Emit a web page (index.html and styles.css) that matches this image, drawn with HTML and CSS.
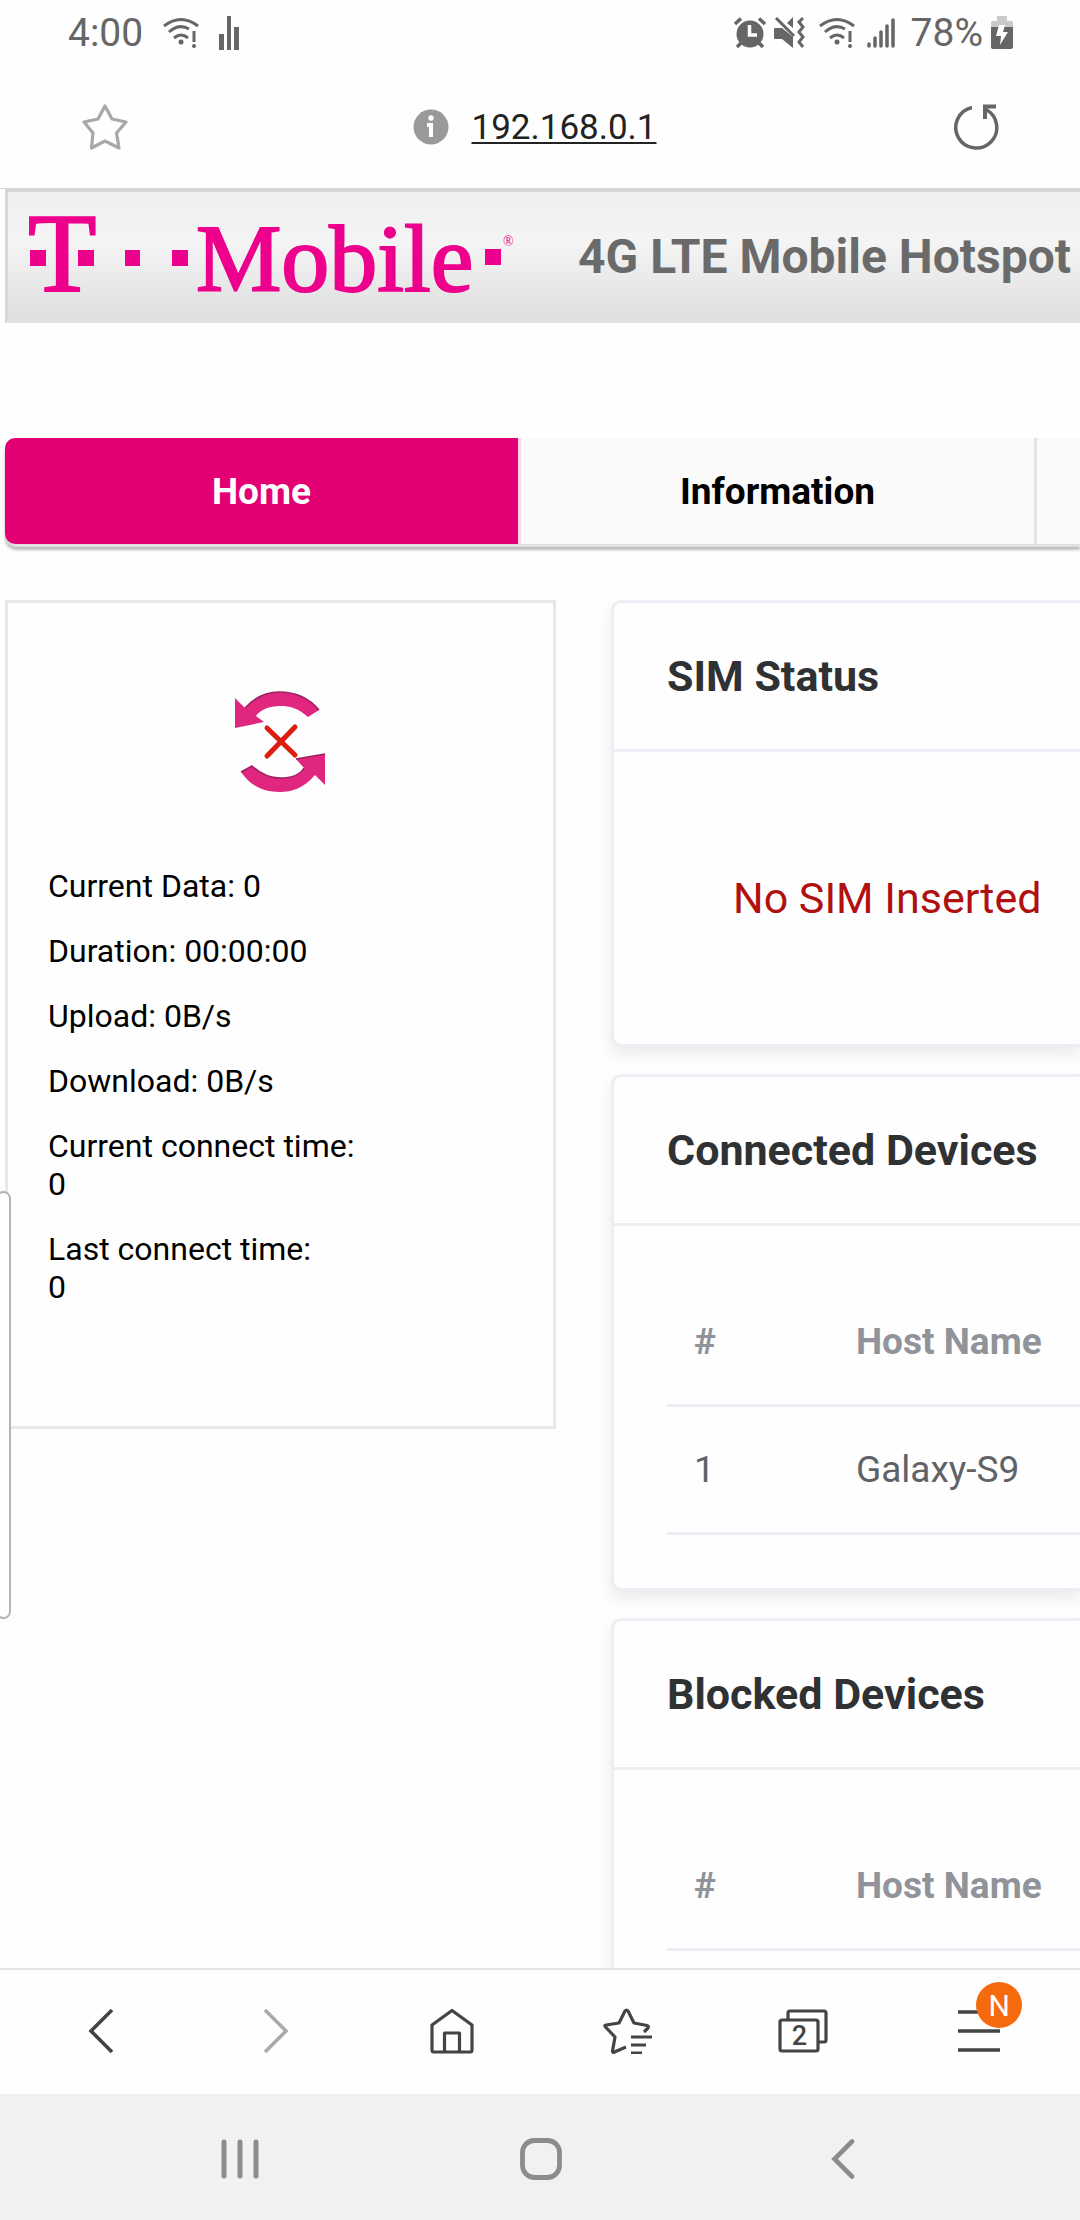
FILE: index.html
```html
<!DOCTYPE html>
<html lang="en">
<head>
	<meta charset="utf-8">
	<title>4G LTE Mobile Hotspot</title>
	<link rel="stylesheet" href="styles.css">
</head>
<body>

	<div class="status">
		<div class="status-side">
			<span class="clock">4:00</span>
			<svg class="wifi" width="36" height="32" viewBox="0 0 36 32" fill="none" stroke="#666" stroke-width="3">
				<path d="M1 9Q18 -4 35 9M6 15Q16 6 26 12M11 21Q18 15 25 21"/>
				<path d="M31 14V25"/>
				<circle cx="18" cy="25" r="2.5" fill="#666" stroke="none"/><circle cx="31" cy="29" r="2" fill="#666" stroke="none"/>
			</svg>
			<svg width="20" height="34" viewBox="0 0 20 34" fill="#666"><path d="M0 18H5V34H0ZM8 0H12V34H8ZM15 11H20V34H15Z"/></svg>
		</div>
		<div class="status-side status-right">
			<svg width="32" height="32" viewBox="0 0 32 32">
				<circle cx="16" cy="17" r="13.5" fill="#666"/>
				<path d="M1 7L7 1.500M31 7L25 1.500M3 30L8 25M29 30L24 25" stroke="#666" stroke-width="3.500"/>
				<path d="M15.500 8V18H23" fill="none" stroke="#fff" stroke-width="3.500"/>
			</svg>
			<svg width="32" height="32" viewBox="0 0 32 32">
				<path d="M0 12Q0 11 1 11H8L19 20V31L8 22H1Q0 22 0 21ZM13 6L19 0V11Z" fill="#666"/>
				<path d="M2 1L20 19" stroke="#666" stroke-width="3"/>
				<path d="M29 1L25 5L29 10L25 15L29 20L25 25L29 30" fill="none" stroke="#666" stroke-width="3"/>
			</svg>
			<svg class="wifi2" width="36" height="32" viewBox="0 0 36 32" fill="none" stroke="#666" stroke-width="3">
				<path d="M1 9Q18 -4 35 9M6 15Q16 6 26 12M11 21Q18 15 25 21"/>
				<path d="M31 14V25"/>
				<circle cx="18" cy="25" r="2.5" fill="#666" stroke="none"/><circle cx="31" cy="29" r="2" fill="#666" stroke="none"/>
			</svg>
			<svg width="28" height="30" viewBox="0 0 28 30" stroke="#666" stroke-width="3.500" stroke-linecap="round"><path d="M2 26V28M8 20V28M14 14V28M20 8V28M26 2V28"/></svg>
			<span class="battery-text">78%</span>
			<svg width="22" height="34" viewBox="0 0 22 34">
				<path d="M6 0H16V5H20Q22 5 22 7V13H0V7Q0 5 2 5H6Z" fill="#c9c9c9"/>
				<path d="M0 11H22V31Q22 33 20 33H2Q0 33 0 31Z" fill="#666"/>
				<path d="M8 9H14L12 16H17L9 29L10 20H5Z" fill="#fff"/>
			</svg>
		</div>
	</div>

	<div class="urlbar">
		<button class="icon-btn" aria-label="Add bookmark">
			<svg width="46" height="46" viewBox="0 0 46 46" fill="none" stroke="#a8a8a8" stroke-width="3.200" stroke-linejoin="round"><path d="M23 2L30 15L44 18L34.500 29L37 44L23 37L9.500 44L11 29L2 18L16 15Z"/></svg>
		</button>
		<div class="address">
			<svg width="36" height="36" viewBox="0 0 36 36"><circle cx="18" cy="18" r="17.500" fill="#999"/><circle cx="18" cy="9" r="2.700" fill="#fff"/><path d="M14 14H20V28H16V18H14Z" fill="#fff"/></svg>
			<a href="#">192.168.0.1</a>
		</div>
		<button class="icon-btn" aria-label="Reload">
			<svg width="46" height="46" viewBox="0 0 46 46" fill="none" stroke="#666"><path d="M18 3.500A20.500 20.500 0 1 0 32 5.500" stroke-width="3.500"/><path d="M42 2.500H31V15" stroke-width="4"/></svg>
		</button>
	</div>

	<div class="page">
		<div class="banner">
			<svg class="logo" width="484" height="90" viewBox="0 0 484 90" fill="#ec008c" stroke="#ec008c" role="img" aria-label="T-Mobile">
				<g stroke="none"><path d="M0 39H16V55H0ZM48 39H64V55H48ZM95 39H110V55H95ZM142 39H158V55H142ZM455 38H471V54H455Z"/></g>
				<text class="logo-t" x="-2" y="80">T</text>
				<text class="logo-name" x="166" y="80">Mobile</text>
				<text class="logo-reg" x="473" y="35">®</text>
			</svg>
			<h1>4G LTE Mobile Hotspot</h1>
		</div>

		<nav class="tabs">
			<a href="#" class="selected">Home</a>
			<a href="#">Information</a>
			<a href="#" aria-label="More"></a>
		</nav>

		<div class="columns">
			<div class="traffic">
				<svg width="94" height="104" viewBox="0 0 94 104">
					<g fill="#e0267f">
						<path d="M1 7L11 17C22 5 33 1 45 1C63 1 75 7 85 19L74 26C64 17 56 15 46 15C35 15 26 19 22 25L30 31L1 37Z"/>
						<path d="M91 94L81 84C70 97 58 101 46 101C28 101 16 94 7 81L18 75C28 84 36 87 46 87C57 87 66 84 70 77L62 68L91 63Z"/>
					</g>
					<path d="M11 17C22 5 33 1 45 1C63 1 75 7 85 19M7 81L18 75C28 84 36 87 46 87C57 87 66 84 70 77M62 68L91 63" fill="none" stroke="#9c2160" stroke-width="1.500"/>
					<path d="M33 37L61 64M61 36L33 65" stroke="#dd1d10" stroke-width="5" stroke-linecap="round"/>
				</svg>
				<p>Current Data: 0</p>
				<p>Duration: 00:00:00</p>
				<p>Upload: 0B/s</p>
				<p>Download: 0B/s</p>
				<p>Current connect time:<br>0</p>
				<p>Last connect time:<br>0</p>
			</div>

			<div class="cards">
				<section class="card">
					<h2>SIM Status</h2>
					<div class="card-body sim">No SIM Inserted</div>
				</section>
				<section class="card">
					<h2>Connected Devices</h2>
					<div class="card-body">
						<table>
							<tr><th class="num">#</th><th>Host Name</th></tr>
							<tr><td>1</td><td>Galaxy-S9</td></tr>
						</table>
					</div>
				</section>
				<section class="card">
					<h2>Blocked Devices</h2>
					<div class="card-body">
						<table>
							<tr><th class="num">#</th><th>Host Name</th></tr>
						</table>
					</div>
				</section>
			</div>
		</div>
		<div class="edge-handle"></div>
	</div>

	<div class="toolbar">
		<button class="icon-btn" aria-label="Back"><svg width="26" height="46" viewBox="0 0 26 46" fill="none" stroke="#444" stroke-width="3.600"><path d="M24 2L3 23L24 44"/></svg></button>
		<button class="icon-btn" aria-label="Forward"><svg width="26" height="46" viewBox="0 0 26 46" fill="none" stroke="#aaa" stroke-width="3.600"><path d="M2 2L23 23L2 44"/></svg></button>
		<button class="icon-btn" aria-label="Home"><svg width="46" height="46" viewBox="0 0 46 46" fill="none" stroke="#444" stroke-width="3.200" stroke-linejoin="round"><path d="M23 2.500L43 17V42Q43 44 41 44H5Q3 44 3 42V17ZM15.500 44V25H30.500V44"/></svg></button>
		<button class="icon-btn" aria-label="Bookmarks"><svg width="50" height="46" viewBox="0 0 50 46" fill="none" stroke="#444" stroke-width="3.200" stroke-linejoin="round"><path d="M23 39L11.500 44Q9.500 45 9.500 43L12 29L2.500 19Q1 17 3 17L16 15L22 3Q23.500 1 25 3L31 15L44 17.500Q46 18 45 20L41 24"/><path d="M28 29H49M28 37H43M28 45H39" stroke-width="3"/></svg></button>
		<button class="icon-btn tab-count" aria-label="Tabs"><svg width="50" height="44" viewBox="0 0 50 44" fill="none" stroke="#444" stroke-width="3.200"><rect x="2" y="11" width="38" height="31" rx="2"/><path d="M10 11V4Q10 2 12 2H46Q48 2 48 4V31Q48 33 46 33H40"/></svg><span>2</span></button>
		<button class="icon-btn menu" aria-label="Menu"><svg width="42" height="42" viewBox="0 0 42 42" stroke="#444" stroke-width="3.400"><path d="M0 2H42M0 21H42M0 40H42"/></svg><span class="badge">N</span></button>
	</div>

	<div class="navbar">
		<button class="icon-btn" aria-label="Recent apps"><svg width="38" height="40" viewBox="0 0 38 40" stroke="#8c8c8c" stroke-width="5" stroke-linecap="round"><path d="M3 3V37M19 3V37M35 3V37"/></svg></button>
		<button class="icon-btn" aria-label="Home screen"><svg width="42" height="42" viewBox="0 0 42 42" fill="none" stroke="#8c8c8c" stroke-width="4.800"><rect x="2.500" y="2.500" width="37" height="37" rx="12"/></svg></button>
		<button class="icon-btn" aria-label="Back"><svg width="24" height="40" viewBox="0 0 24 40" fill="none" stroke="#8c8c8c" stroke-width="4.600" stroke-linecap="round"><path d="M21 2.500L3.500 20L21 37.500"/></svg></button>
	</div>

</body>
</html>
```
FILE: styles.css
```css
*{
	box-sizing: border-box;
}

body{
	margin: 0;
	height: 100vh;
	display: flex;
	flex-direction: column;
	overflow: hidden;
	background: #fefefe;
	font-family: Roboto, sans-serif;
}

svg{
	display: block;
	flex: none;
}

.icon-btn{
	border: none;
	background: none;
	padding: 0;
	font-family: inherit;
	color: #444;
}

/* phone status bar */
.status{
	flex: none;
	height: 66px;
	padding: 0 67px 0 68px;
	display: flex;
	justify-content: space-between;
	align-items: center;
	font-size: 39px;
	color: #666;
}

.status-side{
	display: flex;
	align-items: center;
	gap: 20px;
}

.status-right{
	gap: 8px;
}

.wifi2{
	margin: 0 4px 0 5px;
}

.battery-text{
	margin-left: 8px;
}

/* address bar */
.urlbar{
	flex: none;
	height: 123px;
	padding: 0 80px 0 82px;
	display: flex;
	justify-content: space-between;
	align-items: center;
	border-bottom: 1px solid #d8d8d8;
}

.address{
	display: flex;
	align-items: center;
	gap: 22px;
	margin-right: 12px;
	font-size: 35px;
}

.address a{
	color: #222;
	text-decoration-thickness: 2px;
	text-underline-offset: 3px;
}

/* router page */
.page{
	flex: 1;
	min-height: 0;
	overflow: hidden;
	position: relative;
	padding-left: 5px;
}

.banner{
	height: 134px;
	display: flex;
	align-items: center;
	border: solid #d6d6d6;
	border-width: 3px 0 3px 3px;
	border-bottom-color: #e2e2e2;
	background: linear-gradient(#f0f0f0, #f4f4f4 40%, #ededed 60%, #dedede);
	padding-left: 22px;
}

.logo{
	overflow: visible;
}

.logo-t, .logo-name, .logo-reg{
	font-family: "Liberation Serif", serif;
}

.logo-t{
	font-size: 112px;
	stroke-width: 2px;
}

.logo-name{
	font-size: 96px;
	stroke-width: 2px;
}

.logo-reg{
	font-size: 14px;
	stroke: none;
}

.banner h1{
	margin: 0 0 0 64px;
	font-size: 48px;
	font-weight: 700;
	color: #6a6a6a;
	white-space: nowrap;
}

.tabs{
	margin-top: 115px;
	display: grid;
	grid-template-columns: 48% 48% 1fr;
	height: 109px;
	border-bottom: 3px solid #e0e0e0;
	border-radius: 12px 0 0 12px;
	box-shadow: 0 3px 3px #bbb;
	background: #fafafa;
}

.tabs a{
	display: flex;
	align-items: center;
	justify-content: center;
	border-right: 3px solid #e4e4e4;
	color: #000;
	font-size: 37px;
	font-weight: 700;
	text-decoration: none;
}

.tabs a:last-child{
	border-right: none;
}

.tabs .selected{
	background: #e20074;
	background-clip: padding-box;
	border-right-color: #f3dbe8;
	border-radius: 10px 0 0 10px;
	color: #fff;
}

.columns{
	margin-top: 53px;
	display: grid;
	grid-template-columns: 551px 1fr;
	gap: 55px;
	align-items: start;
}

.traffic{
	border: 3px solid #e8e8e8;
	padding: 88px 40px 120px;
	font-size: 32px;
	line-height: 38px;
	color: #000;
}

.traffic svg{
	margin: 0 auto 72px;
}

.traffic p{
	margin: 0 0 27px;
}

.traffic p:last-child{
	margin: 0;
}

.cards{
	display: grid;
	gap: 27px;
}

.card{
	border: 3px solid #ebeef2;
	border-right: none;
	border-radius: 10px 0 0 10px;
	background: #fefefe;
	box-shadow: 0 8px 16px rgba(0,0,0,0.08);
}

.card h2{
	margin: 0;
	padding: 48px 0 48px 53px;
	border-bottom: 3px solid #ebeef2;
	font-size: 43px;
	line-height: 50px;
	font-weight: 700;
	color: #303133;
	white-space: nowrap;
}

.card-body{
	padding: 53px 0 53px 53px;
}

.sim{
	padding: 121px 0 121px 119px;
	font-size: 43px;
	line-height: 50px;
	color: #b01010;
	white-space: nowrap;
}

table{
	width: 100%;
	border-collapse: separate;
	border-spacing: 0;
	font-size: 37px;
	line-height: 45px;
	color: #606266;
}

th, td{
	padding: 40px 0 40px 27px;
	border-bottom: 3px solid #ebeef2;
	text-align: left;
}

th{
	color: #909399;
}

.num{
	width: 162px;
}

.edge-handle{
	position: absolute;
	left: -4px;
	top: 1002px;
	width: 15px;
	height: 428px;
	border: 2px solid #b4b4b4;
	border-radius: 12px;
	background: #fefefe;
}

/* browser toolbar */
.toolbar{
	flex: none;
	height: 126px;
	padding: 0 13px 2px;
	display: grid;
	grid-template-columns: repeat(6, 1fr);
	place-items: center;
	border-top: 2px solid #e4e4e4;
	background: #fefefe;
}

.tab-count, .menu{
	position: relative;
}

.tab-count span{
	position: absolute;
	left: 0;
	bottom: 2px;
	width: 42px;
	font-size: 27px;
	line-height: 30px;
	font-weight: 500;
	text-align: center;
}

.badge{
	position: absolute;
	top: -28px;
	right: -22px;
	width: 46px;
	height: 46px;
	border-radius: 50%;
	background: #f56a0c;
	color: #fff;
	font-size: 30px;
	line-height: 48px;
}

.navbar{
	flex: none;
	height: 126px;
	padding: 4px 86px 0 89px;
	display: grid;
	grid-template-columns: repeat(3, 1fr);
	place-items: center;
	background: #f1f1f1;
}
```
